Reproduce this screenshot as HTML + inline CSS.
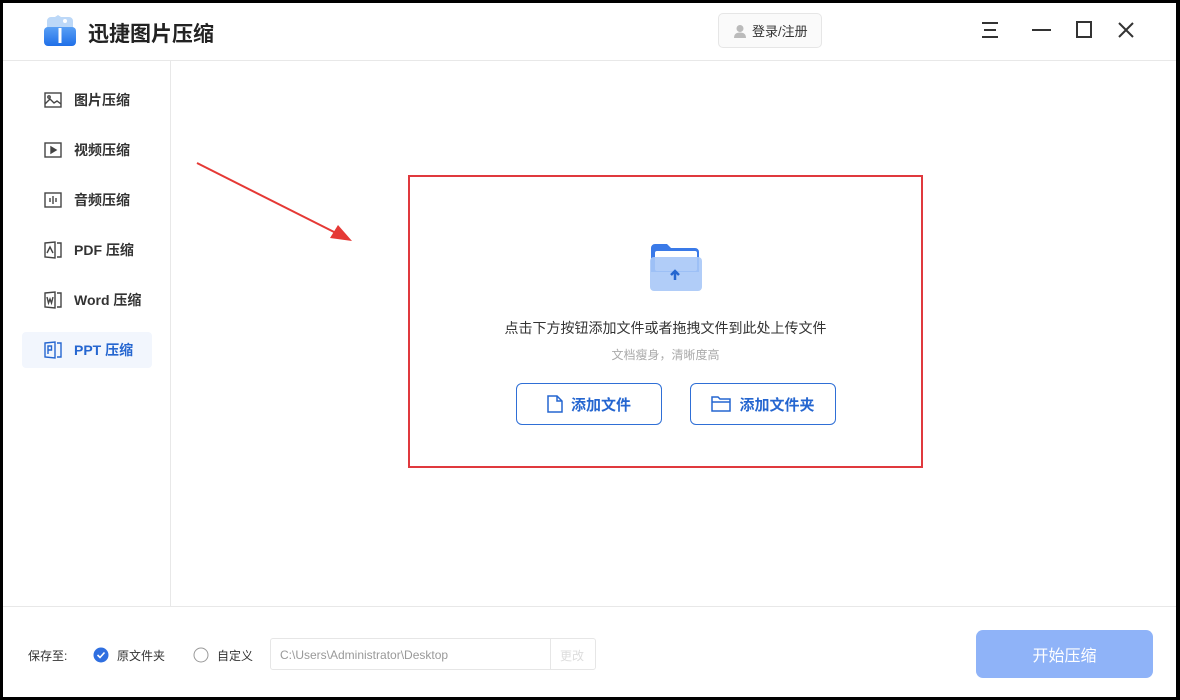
<!DOCTYPE html>
<html><head><meta charset="utf-8"><style>
*{margin:0;padding:0;box-sizing:border-box}
body{width:1180px;height:700px;background:#000;font-family:"Liberation Sans","Noto Sans CJK SC",sans-serif;position:relative;overflow:hidden}
.win{position:absolute;left:3px;top:3px;width:1173px;height:694px;background:#fff}
.abs{position:absolute}
.nav{position:absolute;left:22px;width:130px;height:36px;display:flex;align-items:center;font-size:14px;color:#333;font-weight:bold;border-radius:4px}
.nav svg{margin-left:22px;margin-right:12px}
.btn{position:absolute;top:383px;height:42px;border:1px solid #2f6fd6;border-radius:6px;color:#2566d0;font-weight:bold;font-size:15px;display:flex;align-items:center;justify-content:center;gap:8px}
</style></head><body>
<div class="win"></div>
<svg class="abs" style="left:43px;top:15px" width="34" height="32" viewBox="0 0 34 32">
<defs><linearGradient id="g" x1="0" y1="0" x2="0" y2="1"><stop offset="0" stop-color="#5aa0f5"/><stop offset="1" stop-color="#1f6fe8"/></linearGradient></defs>
<path d="M4 14V6a4 4 0 0 1 4-4h4l3-2 3 2h8a4 4 0 0 1 4 4v8z" fill="#bcd8f8"/>
<circle cx="22" cy="6" r="2" fill="#fff"/>
<rect x="1" y="12" width="32" height="19" rx="4" fill="url(#g)"/>
<rect x="15.5" y="13" width="3" height="15" fill="#fff"/>
</svg>
<div class="abs" style="left:88px;top:18px;font-size:21px;font-weight:bold;color:#222">迅捷图片压缩</div>
<div class="abs" style="left:718px;top:13px;width:104px;height:35px;border:1px solid #e6e6e6;border-radius:5px;background:#fafafa;font-size:13px;color:#333;display:flex;align-items:center;padding-left:14px">
<svg width="14" height="14" viewBox="0 0 14 14"><circle cx="7" cy="4.5" r="3.5" fill="#bbb"/><path d="M1 14 Q1 8.5 7 8.5 Q13 8.5 13 14Z" fill="#bbb"/></svg><span style="margin-left:5px">登录/注册</span></div>
<svg class="abs" style="left:980px;top:20px" width="160" height="20" viewBox="0 0 160 20" stroke="#333" stroke-width="2" fill="none">
<path d="M2 3h16M4 10h12M2 17h16"/><path d="M52 10h19"/><rect x="97" y="2" width="14" height="15"/><path d="M139 3l14 14M153 3l-14 14"/></svg>
<div class="abs" style="left:3px;top:60px;width:1173px;height:1px;background:#e8e8e8"></div>
<div class="abs" style="left:170px;top:61px;width:1px;height:545px;background:#e8e8e8"></div>
<div class="abs" style="left:3px;top:606px;width:1173px;height:1px;background:#e8e8e8"></div>
<div class="nav" style="top:82px"><svg width="18" height="16" viewBox="0 0 18 16" fill="none" stroke="#444" stroke-width="1.4"><rect x="1" y="1" width="16" height="14"/><path d="M1 12l5-5 4 4 3-2 4 3"/><circle cx="5" cy="5" r="1.2"/></svg>图片压缩</div>
<div class="nav" style="top:132px"><svg width="18" height="16" viewBox="0 0 18 16" fill="none" stroke="#444" stroke-width="1.4"><rect x="1" y="1" width="16" height="14"/><path d="M7 5v6l5-3z" fill="#444"/></svg>视频压缩</div>
<div class="nav" style="top:182px"><svg width="18" height="16" viewBox="0 0 18 16" fill="none" stroke="#444" stroke-width="1.4"><rect x="1" y="1" width="16" height="14"/><path d="M6 6v4M9 4v8M12 6v4"/></svg>音频压缩</div>
<div class="nav" style="top:232px"><svg width="18" height="18" viewBox="0 0 18 18" fill="none" stroke="#444" stroke-width="1.4"><path d="M1 2l10-1v16L1 16z"/><path d="M13 2h4v14h-4"/><path d="M3 12l3-6 3 6"/></svg>PDF 压缩</div>
<div class="nav" style="top:282px"><svg width="18" height="18" viewBox="0 0 18 18" fill="none" stroke="#444" stroke-width="1.4"><path d="M1 2l10-1v16L1 16z"/><path d="M13 2h4v14h-4"/><path d="M3 6l1.5 6 1.5-4 1.5 4L9 6"/></svg>Word 压缩</div>
<div class="nav" style="top:332px;background:#f2f6fd;color:#2566d0"><svg width="18" height="18" viewBox="0 0 18 18" fill="none" stroke="#2566d0" stroke-width="1.4"><path d="M1 2l10-1v16L1 16z"/><path d="M13 2h4v14h-4"/><path d="M4 13V5h3.5v4H4"/></svg>PPT 压缩</div>
<svg class="abs" style="left:190px;top:155px" width="170" height="95" viewBox="0 0 170 95"><path d="M7 8L150 80" stroke="#e53935" stroke-width="2"/><path d="M162 86L140 83L148 70Z" fill="#e53935"/></svg>
<div class="abs" style="left:408px;top:175px;width:515px;height:293px;border:2px solid #e0393e"></div>
<svg class="abs" style="left:649px;top:242px" width="54" height="50" viewBox="0 0 54 50">
<path d="M2 6a4 4 0 0 1 4-4h12l4 4h24a4 4 0 0 1 4 4v20H2z" fill="#3a7ae8"/>
<rect x="6" y="9" width="42" height="20" rx="2" fill="#fff"/>
<rect x="1" y="15" width="52" height="34" rx="4" fill="#a9c8f7" opacity=".9"/>
<path d="M26 38v-8M22 33l4-4 4 4" stroke="#2566d0" stroke-width="2.5" fill="none"/></svg>
<div class="abs" style="left:408px;top:318px;width:515px;text-align:center;font-size:14px;color:#333">点击下方按钮添加文件或者拖拽文件到此处上传文件</div>
<div class="abs" style="left:408px;top:346px;width:515px;text-align:center;font-size:12px;color:#aaa">文档瘦身，清晰度高</div>
<div class="btn" style="left:516px;width:146px"><svg width="16" height="18" viewBox="0 0 16 18" fill="none" stroke="#2566d0" stroke-width="1.5"><path d="M1 1h9l5 5v11H1z"/><path d="M10 1v5h5"/></svg>添加文件</div>
<div class="btn" style="left:690px;width:146px"><svg width="20" height="16" viewBox="0 0 20 16" fill="none" stroke="#2566d0" stroke-width="1.5"><path d="M1 1h6l2 2h10v12H1z"/><path d="M1 6h18"/></svg>添加文件夹</div>
<div class="abs" style="left:28px;top:647px;font-size:12px;color:#333">保存至:</div>
<svg class="abs" style="left:93px;top:647px" width="16" height="16"><circle cx="8" cy="8" r="7.5" fill="#2f6fe0"/><path d="M4.5 8l2.5 2.5 4.5-5" stroke="#fff" stroke-width="1.6" fill="none"/></svg>
<div class="abs" style="left:117px;top:647px;font-size:12px;color:#333">原文件夹</div>
<svg class="abs" style="left:193px;top:647px" width="16" height="16"><circle cx="8" cy="8" r="7" fill="none" stroke="#999"/></svg>
<div class="abs" style="left:217px;top:647px;font-size:12px;color:#333">自定义</div>
<div class="abs" style="left:270px;top:638px;width:326px;height:32px;border:1px solid #e6e6e6;border-radius:3px;font-size:12px;color:#999;padding:9px 0 0 9px">C:\Users\Administrator\Desktop</div>
<div class="abs" style="left:550px;top:639px;width:1px;height:30px;background:#e6e6e6"></div>
<div class="abs" style="left:560px;top:647px;font-size:12px;color:#ddd">更改</div>
<div class="abs" style="left:976px;top:630px;width:177px;height:48px;border-radius:7px;background:#8fb3f8;color:#fff;font-size:16px;display:flex;align-items:center;justify-content:center">开始压缩</div>
</body></html>
